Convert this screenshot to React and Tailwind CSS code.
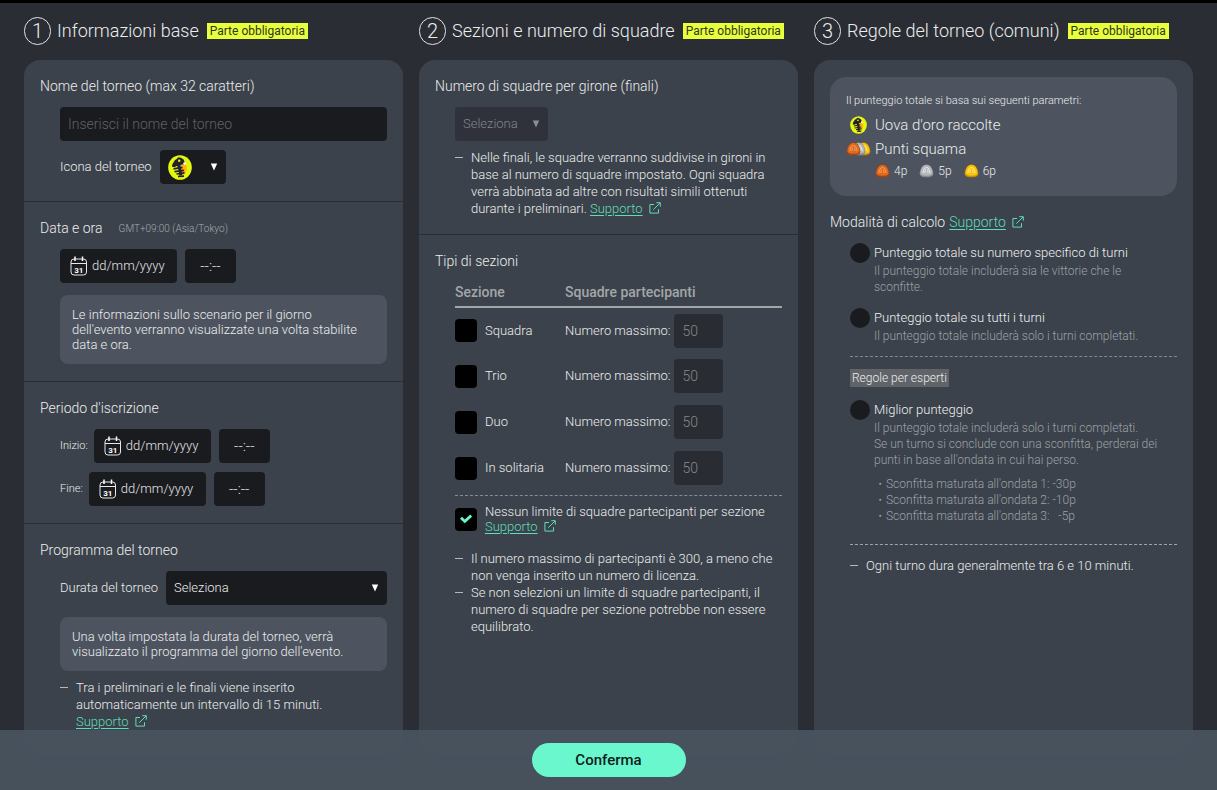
import React, { useState } from "react";

const SEZIONI = [
  { id: "squadra", nome: "Squadra" },
  { id: "trio", nome: "Trio" },
  { id: "duo", nome: "Duo" },
  { id: "solitaria", nome: "In solitaria" },
];

const SQUAME = [
  { punti: "4p", colore: "bronzo" },
  { punti: "5p", colore: "argento" },
  { punti: "6p", colore: "oro" },
];

const COLORI = {
  bronzo: { scuro: "#a8410c", base: "#dd6a1f", chiaro: "#f5a566" },
  argento: { scuro: "#85898e", base: "#b4b8bd", chiaro: "#eceef0" },
  oro: { scuro: "#c98a00", base: "#fbc40c", chiaro: "#fff08a" },
};

function IconaUovo({ className }) {
  return (
    <svg className={className} viewBox="0 0 24 25" aria-hidden="true">
      <ellipse cx="12" cy="12.5" rx="11.8" ry="12.3" fill="#e3f80c" />
      <path
        d="M13 9c2-1.600 5-.6 5.600 2.500.6 3.500-.6 7-3.600 9l-3-3z"
        fill="#ffb60a"
      />
      <path
        d="M4.200 9.400 6.800 5.200 9.200 3.600 10.200 2.300 13 2.800l2.600 1.800 1.100 2.600-1 2-2.700.6-1.600 1.400-3-.2-1.700 1.200-2.700-.4z"
        fill="#25222f"
      />
      <path
        d="M10.500 9.500c1 3 1.800 6.500 2.300 11"
        fill="none"
        stroke="#25222f"
        strokeWidth="3"
      />
      <path
        d="M5.500 13.900l9-1.500M6.500 16.700l9.500-1.400M8.500 19l8-1.200M10 21.500l6-.4"
        fill="none"
        stroke="#25222f"
        strokeWidth="1.700"
      />
      <circle cx="11.200" cy="5.800" r="1.200" fill="#e3f80c" />
      <circle cx="16.600" cy="8.600" r="1.300" fill="#fff" />
    </svg>
  );
}

function SagomaSquama({ colore }) {
  const c = COLORI[colore];
  return (
    <>
      <path
        d="M7.500.5c2.600 0 4.300 1.300 5.400 3.700.9 2 1.600 4 1.400 5.800-.2 1.900-1.500 2.600-3.200 2.900-2.300.4-4.900.4-7.200 0C2.200 12.600.9 11.900.7 10 .5 8.200 1.200 6.200 2.100 4.200 3.200 1.800 4.900.5 7.500.5z"
        fill={c.scuro}
      />
      <path
        d="M7.500.9c2.400 0 3.900 1.300 4.900 3.500.9 1.900 1.300 3.500 1.100 4.900-.2 1.500-1.200 1.900-2.700 2.100-2.100.3-4.500.3-6.600 0-1.500-.2-2.500-.6-2.700-2.100C1.300 7.900 1.700 6.300 2.600 4.400 3.600 2.200 5.100.9 7.500.9z"
        fill={c.base}
      />
      <path
        d="M4 9.200C4 6 5.200 3.500 7.500 3.500S11 6 11 9.200M6.300 5.500 5.900 9M8.700 5.500 9.100 9"
        fill="none"
        stroke={c.chiaro}
        strokeWidth=".9"
      />
    </>
  );
}

function IconaSquama({ colore }) {
  return (
    <svg className="h-3.5 w-[15px]" viewBox="0 0 15 14" aria-hidden="true">
      <SagomaSquama colore={colore} />
    </svg>
  );
}

function IconaSquame() {
  return (
    <svg className="h-3.5 w-[25px]" viewBox="0 0 25 14" aria-hidden="true">
      <g transform="translate(10 0)">
        <SagomaSquama colore="oro" />
      </g>
      <g transform="translate(5 0)">
        <SagomaSquama colore="argento" />
      </g>
      <SagomaSquama colore="bronzo" />
    </svg>
  );
}

function IconaCalendario() {
  return (
    <svg className="h-5 w-[18px] shrink-0" viewBox="0 0 18 20" aria-hidden="true">
      <rect x="1" y="3" width="15.500" height="16" rx="3" fill="none" stroke="#e8e8e8" />
      <path d="M1 7.500h15.500" stroke="#e8e8e8" />
      <path d="M5 .5v4.500M12.500 .5v4.500" stroke="#fff" strokeWidth="1.500" />
      <text
        x="8.800"
        y="16.500"
        fill="#fff"
        fontSize="8"
        fontWeight="700"
        textAnchor="middle"
        fontFamily="Roboto, sans-serif"
      >
        31
      </text>
    </svg>
  );
}

function LinkSupporto() {
  return (
    <a href="#supporto" className="whitespace-nowrap text-[#5fdcb8]">
      <span className="underline underline-offset-2">Supporto</span>
      <svg
        className="ml-1.5 inline h-3 w-3 align-[-1px]"
        viewBox="0 0 12 12"
        fill="none"
        stroke="currentColor"
        aria-hidden="true"
      >
        <path d="M5 2.500H.9v8.600h8.600V7.200M4.300 7.700 11 1M7.300.7h4v4" />
      </svg>
    </a>
  );
}

function Colonna({ numero, titolo, children }) {
  return (
    <section className="flex min-w-0 flex-col">
      <div className="mb-[15px] flex items-center">
        <span className="flex h-7 w-[27px] shrink-0 items-center justify-center rounded-full border border-[#e4e4e6] text-xl">
          {numero}
        </span>
        <h2 className="ml-1.5 text-lg leading-7">{titolo}</h2>
        <span className="ml-2 bg-[#e8ff3c] px-[3px] text-xs leading-4 font-normal whitespace-nowrap text-[#33361f]">
          Parte obbligatoria
        </span>
      </div>
      <div className="flex-1 divide-y divide-[#2a2d36] rounded-[16px] bg-[#3b424b]">
        {children}
      </div>
    </section>
  );
}

function Blocco({ titolo, extra, children }) {
  return (
    <div className="px-4 pt-4 pb-[17px]">
      <div className="mb-[11px] flex items-center">
        <h3 className="text-sm leading-5">{titolo}</h3>
        {extra}
      </div>
      <div className="pl-5">{children}</div>
    </div>
  );
}

function Nota({ children }) {
  return (
    <p className="mt-3 rounded-lg bg-[#4d545f] py-3 pr-7 pl-3 text-[13px] leading-[15px]">
      {children}
    </p>
  );
}

function Voce({ children }) {
  return (
    <li className="flex">
      <span className="mt-2 mr-2 h-px w-2 shrink-0 bg-[#b4b7bb]" />
      <div>{children}</div>
    </li>
  );
}

function DataOra({ nome }) {
  return (
    <div className="flex gap-2">
      <label className="flex h-[34px] w-[117px] items-center rounded bg-[#191b1f] pl-2.5">
        <IconaCalendario />
        <input
          type="text"
          aria-label={`Data ${nome}`}
          placeholder="dd/mm/yyyy"
          className="ml-1 w-full min-w-0 bg-transparent text-[13px] placeholder:text-[#e4e5e7]"
        />
      </label>
      <input
        type="text"
        aria-label={`Ora ${nome}`}
        placeholder="--:--"
        className="h-[34px] w-[51px] rounded bg-[#191b1f] text-center text-[15px] placeholder:text-[#e4e5e7]"
      />
    </div>
  );
}

function Selezione({ id, label, disabled, className }) {
  return (
    <div className={`relative ${className}`}>
      <select
        id={id}
        aria-label={label}
        disabled={disabled}
        className="h-[34px] w-full appearance-none rounded bg-[#191b1f] px-2 text-[13px] disabled:bg-[#2f323b] disabled:text-[#80848b] disabled:opacity-100"
      >
        <option>Seleziona</option>
      </select>
      <svg
        className={`pointer-events-none absolute top-[13px] right-2 h-2 w-2 ${disabled ? "text-[#8b8e93]" : "text-white"}`}
        viewBox="0 0 8 8"
        fill="currentColor"
        aria-hidden="true"
      >
        <path d="M.8.5h6.400L4 7.500z" />
      </svg>
    </div>
  );
}

function Modalita({ id, titolo, children }) {
  return (
    <div>
      <div className="flex items-center gap-1">
        <input
          type="radio"
          id={id}
          name="modalita"
          className="h-5 w-5 shrink-0 appearance-none rounded-full bg-[#191b1e] checked:border-4 checked:border-[#6af7ce]"
        />
        <label htmlFor={id} className="text-[13px] leading-[21px] text-[#f0f1f2]">
          {titolo}
        </label>
      </div>
      <div className="pr-3 pl-6 text-xs leading-4 text-[#9da1a6]">{children}</div>
    </div>
  );
}

function App() {
  const [senzaLimite, setSenzaLimite] = useState(true);

  return (
    <div className="flex min-h-screen flex-col border-t-[3px] border-black bg-[#2a2d34] font-['Roboto',sans-serif] font-light text-[#eceded]">
      <main className="grid flex-1 grid-cols-3 gap-4 px-6 pt-3.5 pb-9">
        <Colonna numero="1" titolo="Informazioni base">
          <Blocco titolo="Nome del torneo (max 32 caratteri)">
            <input
              type="text"
              aria-label="Nome del torneo"
              maxLength={32}
              placeholder="Inserisci il nome del torneo"
              className="h-[34px] w-full rounded bg-[#191b1f] px-2 text-sm placeholder:text-[#5f6266]"
            />
            <div className="mt-[9px] flex items-center gap-2 text-[13px]">
              <span id="icona-label">Icona del torneo</span>
              <button
                type="button"
                aria-labelledby="icona-label"
                className="flex h-[34px] w-[66px] items-center justify-between rounded bg-[#191b1f] px-2"
              >
                <IconaUovo className="h-[25px] w-6" />
                <svg className="h-2 w-2" viewBox="0 0 8 8" fill="#fff" aria-hidden="true">
                  <path d="M.8.5h6.400L4 7.500z" />
                </svg>
              </button>
            </div>
          </Blocco>
          <Blocco
            titolo="Data e ora"
            extra={
              <span className="ml-4 text-[10px] text-[#a5a9ae]">
                GMT+09:00 (Asia/Tokyo)
              </span>
            }
          >
            <DataOra nome="evento" />
            <Nota>
              Le informazioni sullo scenario per il giorno dell'evento verranno
              visualizzate una volta stabilite data e ora.
            </Nota>
          </Blocco>
          <Blocco titolo="Periodo d'iscrizione">
            <div className="flex items-center gap-1.5">
              <span className="text-[11px]">Inizio:</span>
              <DataOra nome="inizio" />
            </div>
            <div className="mt-[9px] flex items-center gap-1.5">
              <span className="text-[11px]">Fine:</span>
              <DataOra nome="fine" />
            </div>
          </Blocco>
          <Blocco titolo="Programma del torneo">
            <div className="flex items-center gap-2 text-[13px]">
              <label htmlFor="durata" className="whitespace-nowrap">
                Durata del torneo
              </label>
              <Selezione id="durata" className="flex-1" />
            </div>
            <Nota>
              Una volta impostata la durata del torneo, verrà visualizzato il
              programma del giorno dell'evento.
            </Nota>
            <ul className="mt-2 text-[13px] leading-[17px]">
              <Voce>
                Tra i preliminari e le finali viene inserito automaticamente un
                intervallo di 15 minuti.
                <br />
                <LinkSupporto />
              </Voce>
            </ul>
          </Blocco>
        </Colonna>

        <Colonna numero="2" titolo="Sezioni e numero di squadre">
          <Blocco titolo="Numero di squadre per girone (finali)">
            <Selezione
              id="girone"
              label="Numero di squadre per girone"
              disabled
              className="w-[93px]"
            />
            <ul className="mt-2 text-[13px] leading-[17px]">
              <Voce>
                Nelle finali, le squadre verranno suddivise in gironi in base al
                numero di squadre impostato. Ogni squadra verrà abbinata ad
                altre con risultati simili ottenuti durante i preliminari.{" "}
                <LinkSupporto />
              </Voce>
            </ul>
          </Blocco>
          <Blocco titolo="Tipi di sezioni">
            <table className="w-full text-left text-[13px]">
              <thead>
                <tr className="border-b-2 border-[#a3a6a9] text-sm text-[#a3a6a9]">
                  <th className="h-6 w-[110px] pb-1 font-medium">Sezione</th>
                  <th className="pb-1 font-medium">Squadre partecipanti</th>
                </tr>
              </thead>
              <tbody>
                {SEZIONI.map((s) => (
                  <tr key={s.id} className="h-[46px]">
                    <td>
                      <div className="flex items-center gap-2">
                        <input
                          type="checkbox"
                          id={s.id}
                          className="h-[23px] w-[22px] appearance-none rounded bg-black checked:border-4 checked:border-[#6af7ce]"
                        />
                        <label htmlFor={s.id}>{s.nome}</label>
                      </div>
                    </td>
                    <td>
                      <label className="flex items-center gap-1">
                        Numero massimo:
                        <input
                          type="text"
                          disabled
                          defaultValue="50"
                          className="h-[34px] w-[49px] rounded bg-[#292c32] px-2 text-sm text-[#85888c]"
                        />
                      </label>
                    </td>
                  </tr>
                ))}
              </tbody>
            </table>
            <div className="mt-1 flex items-center gap-2 border-t border-dashed border-[#888c90] pt-2">
              <span className="relative flex">
                <input
                  type="checkbox"
                  id="senza-limite"
                  checked={senzaLimite}
                  onChange={(e) => setSenzaLimite(e.target.checked)}
                  className="h-[23px] w-[22px] appearance-none rounded bg-black"
                />
                {senzaLimite && (
                  <svg
                    className="pointer-events-none absolute top-[6px] left-[5px] h-2.5 w-3"
                    viewBox="0 0 12 10"
                    fill="none"
                    stroke="#6af7ce"
                    strokeWidth="2.800"
                    aria-hidden="true"
                  >
                    <path d="M1 3.800 4.800 7.400 11.300 1.600" />
                  </svg>
                )}
              </span>
              <div className="text-[13px] leading-[15px]">
                <label htmlFor="senza-limite" className="block">
                  Nessun limite di squadre partecipanti per sezione
                </label>
                <LinkSupporto />
              </div>
            </div>
            <ul className="mt-4 text-[13px] leading-[17px]">
              <Voce>
                Il numero massimo di partecipanti è 300, a meno che non venga
                inserito un numero di licenza.
              </Voce>
              <Voce>
                Se non selezioni un limite di squadre partecipanti, il numero di
                squadre per sezione potrebbe non essere equilibrato.
              </Voce>
            </ul>
          </Blocco>
        </Colonna>

        <Colonna numero="3" titolo="Regole del torneo (comuni)">
          <div className="px-4 pt-[17px]">
            <div className="rounded-[16px] bg-[#4d545f] px-4 pt-3.5 pb-[15px]">
              <p className="mb-0.5 text-[11px] leading-5">
                Il punteggio totale si basa sui seguenti parametri:
              </p>
              <div className="flex h-6 items-center gap-1 text-[15px]">
                <span className="flex w-[25px] justify-center">
                  <IconaUovo className="h-[18px] w-[17px]" />
                </span>
                Uova d'oro raccolte
              </div>
              <div className="flex h-6 items-center gap-1 text-[15px]">
                <IconaSquame />
                Punti squama
              </div>
              <ul className="flex gap-3 pl-[29px] text-xs leading-5">
                {SQUAME.map((s) => (
                  <li key={s.colore} className="flex items-center gap-1">
                    <IconaSquama colore={s.colore} />
                    {s.punti}
                  </li>
                ))}
              </ul>
            </div>

            <div className="mt-4 mb-2.5 flex items-center gap-1 text-sm leading-5">
              <h3>Modalità di calcolo</h3>
              <LinkSupporto />
            </div>

            <div className="pl-5">
              <Modalita id="turni-specifici" titolo="Punteggio totale su numero specifico di turni">
                <p>Il punteggio totale includerà sia le vittorie che le sconfitte.</p>
              </Modalita>
              <div className="mt-3">
                <Modalita id="tutti-turni" titolo="Punteggio totale su tutti i turni">
                  <p>Il punteggio totale includerà solo i turni completati.</p>
                </Modalita>
              </div>
              <div className="mt-3 border-t border-dashed border-[#84888d] pt-3">
                <h4 className="w-fit bg-[#606468] px-0.5 text-xs leading-[18px]">
                  Regole per esperti
                </h4>
              </div>
              <div className="mt-3">
                <Modalita id="miglior-punteggio" titolo="Miglior punteggio">
                  <p>
                    Il punteggio totale includerà solo i turni completati.
                    <br />
                    Se un turno si conclude con una sconfitta, perderai dei punti
                    in base all'ondata in cui hai perso.
                  </p>
                  <ul className="mt-2">
                    <li>・Sconfitta maturata all'ondata 1: -30p</li>
                    <li>・Sconfitta maturata all'ondata 2: -10p</li>
                    <li>・Sconfitta maturata all'ondata 3: &nbsp;&nbsp;-5p</li>
                  </ul>
                </Modalita>
              </div>
              <ul className="mt-5 border-t border-dashed border-[#a0a3a7] pt-3 text-[13px] leading-[17px]">
                <Voce>Ogni turno dura generalmente tra 6 e 10 minuti.</Voce>
              </ul>
            </div>
          </div>
        </Colonna>
      </main>

      <footer className="fixed inset-x-0 bottom-0 flex h-[60px] items-center justify-center bg-[#49535f]/95 backdrop-blur-sm">
        <button
          type="button"
          className="h-[34px] w-[154px] rounded-full bg-[#6af7ce] text-[15px] font-medium text-[#10201b]"
        >
          Conferma
        </button>
      </footer>
    </div>
  );
}

export default App;
